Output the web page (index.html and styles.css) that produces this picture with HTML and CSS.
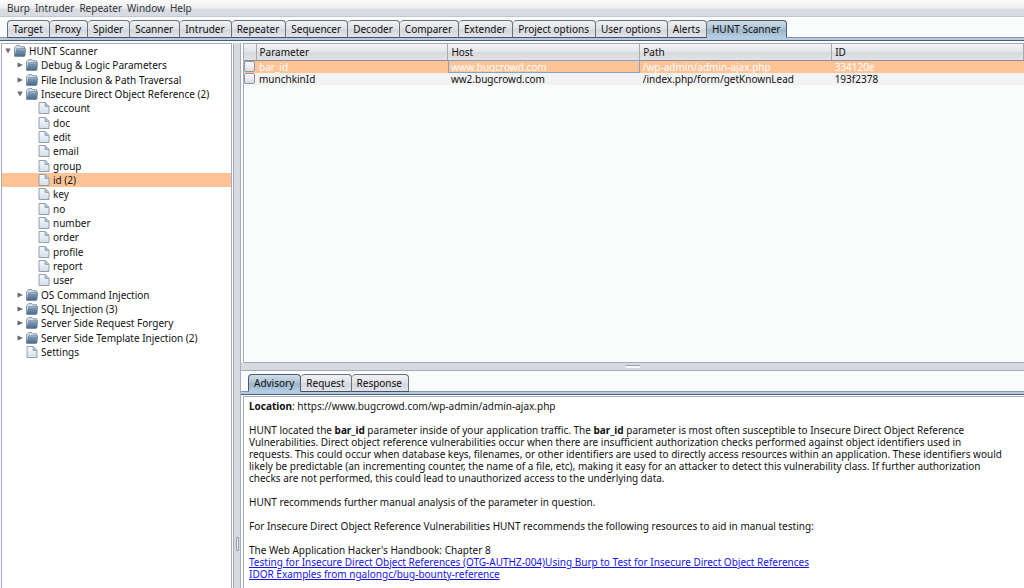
FILE: index.html
```
<!DOCTYPE html>
<html lang="en">

<head>
    <meta charset="UTF-8">
    <meta name="viewport" content="width=device-width, initial-scale=1.0">
    <title>HUNT Scanner</title>
    <link rel="stylesheet" href="styles.css">
</head>

<body>
    <svg class="defs" width="0" height="0">
        <defs>
            <linearGradient id="folder-fill" x1="0" y1="0" x2="0" y2="1">
                <stop offset="0" stop-color="#86a0b9" />
                <stop offset="1" stop-color="#4a6b8c" />
            </linearGradient>
            <linearGradient id="file-fill" x1="0" y1="0" x2="0" y2="1">
                <stop offset="0" stop-color="#f8fafc" />
                <stop offset="1" stop-color="#d2deea" />
            </linearGradient>
            <symbol id="folder" viewBox="0 0 12 12">
                <path d="M.5 11V2.8L2.6.6H6l1 1.2h3.6v2" fill="#d5dfe9" stroke="#6f8294" stroke-width=".8" />
                <path d="M.7 11.4 2.7 3.7H11.6L11 10.6 10.3 11.4Z" fill="url(#folder-fill)" stroke="#58728c" stroke-width=".6" />
                <path d="M3.2 4.5h7.6" stroke="#a9bdd0" stroke-width=".6" />
            </symbol>
            <symbol id="file" viewBox="0 0 11 12">
                <path d="M.5.5h6.3l3.7 3.7v7.3H.5Z" fill="url(#file-fill)" stroke="#8995a3" stroke-width=".9" />
                <path d="M6.6.7v3.7h3.7" fill="#b5c7d8" stroke="#7d91a6" stroke-width=".8" />
            </symbol>
            <symbol id="right" viewBox="0 0 6 6">
                <path d="M.5.5 6 3 .5 5.5Z" fill="#6b6b6b" />
            </symbol>
            <symbol id="down" viewBox="0 0 6 6">
                <path d="M.3.4h5.4L3 5.6Z" fill="#6b6b6b" />
            </symbol>
        </defs>
    </svg>

    <nav class="menubar">
        <button>Burp</button>
        <button>Intruder</button>
        <button>Repeater</button>
        <button>Window</button>
        <button>Help</button>
    </nav>

    <div class="tabs main-tabs">
        <button>Target</button>
        <button>Proxy</button>
        <button>Spider</button>
        <button>Scanner</button>
        <button>Intruder</button>
        <button>Repeater</button>
        <button>Sequencer</button>
        <button>Decoder</button>
        <button>Comparer</button>
        <button>Extender</button>
        <button>Project options</button>
        <button>User options</button>
        <button>Alerts</button>
        <button class="selected">HUNT Scanner</button>
    </div>

    <div class="workspace">
        <aside class="sidebar">
            <ul class="tree">
                <li class="root"><button aria-label="Collapse"><svg><use href="#down" /></svg></button><svg class="icon"><use href="#folder" /></svg>HUNT Scanner</li>
                <li class="group"><button aria-label="Expand"><svg><use href="#right" /></svg></button><svg class="icon"><use href="#folder" /></svg>Debug &amp; Logic Parameters</li>
                <li class="group"><button aria-label="Expand"><svg><use href="#right" /></svg></button><svg class="icon"><use href="#folder" /></svg>File Inclusion &amp; Path Traversal</li>
                <li class="group"><button aria-label="Collapse"><svg><use href="#down" /></svg></button><svg class="icon"><use href="#folder" /></svg>Insecure Direct Object Reference (2)</li>
                <li class="leaf"><svg class="icon"><use href="#file" /></svg>account</li>
                <li class="leaf"><svg class="icon"><use href="#file" /></svg>doc</li>
                <li class="leaf"><svg class="icon"><use href="#file" /></svg>edit</li>
                <li class="leaf"><svg class="icon"><use href="#file" /></svg>email</li>
                <li class="leaf"><svg class="icon"><use href="#file" /></svg>group</li>
                <li class="leaf selected"><svg class="icon"><use href="#file" /></svg>id (2)</li>
                <li class="leaf"><svg class="icon"><use href="#file" /></svg>key</li>
                <li class="leaf"><svg class="icon"><use href="#file" /></svg>no</li>
                <li class="leaf"><svg class="icon"><use href="#file" /></svg>number</li>
                <li class="leaf"><svg class="icon"><use href="#file" /></svg>order</li>
                <li class="leaf"><svg class="icon"><use href="#file" /></svg>profile</li>
                <li class="leaf"><svg class="icon"><use href="#file" /></svg>report</li>
                <li class="leaf"><svg class="icon"><use href="#file" /></svg>user</li>
                <li class="group"><button aria-label="Expand"><svg><use href="#right" /></svg></button><svg class="icon"><use href="#folder" /></svg>OS Command Injection</li>
                <li class="group"><button aria-label="Expand"><svg><use href="#right" /></svg></button><svg class="icon"><use href="#folder" /></svg>SQL Injection (3)</li>
                <li class="group"><button aria-label="Expand"><svg><use href="#right" /></svg></button><svg class="icon"><use href="#folder" /></svg>Server Side Request Forgery</li>
                <li class="group"><button aria-label="Expand"><svg><use href="#right" /></svg></button><svg class="icon"><use href="#folder" /></svg>Server Side Template Injection (2)</li>
                <li class="group-leaf"><svg class="icon"><use href="#file" /></svg>Settings</li>
            </ul>
        </aside>

        <div class="splitter vertical"><span class="grip"></span></div>

        <main class="content">
            <div class="issues">
                <table>
                    <thead>
                        <tr>
                            <th class="check"></th>
                            <th>Parameter</th>
                            <th>Host</th>
                            <th>Path</th>
                            <th>ID</th>
                        </tr>
                    </thead>
                    <tbody>
                        <tr class="selected">
                            <td class="check"><input type="checkbox" aria-label="bar_id"></td>
                            <td>bar_id</td>
                            <td class="focused">www.bugcrowd.com</td>
                            <td>/wp-admin/admin-ajax.php</td>
                            <td>334120e</td>
                        </tr>
                        <tr>
                            <td class="check"><input type="checkbox" aria-label="munchkinId"></td>
                            <td>munchkinId</td>
                            <td>ww2.bugcrowd.com</td>
                            <td>/index.php/form/getKnownLead</td>
                            <td>193f2378</td>
                        </tr>
                    </tbody>
                </table>
            </div>

            <div class="splitter horizontal"><span class="grip"></span></div>

            <div class="details">
                <div class="tabs">
                    <button class="selected">Advisory</button>
                    <button>Request</button>
                    <button>Response</button>
                </div>
                <div class="advisory">
                    <p><b>Location</b>: https://www.bugcrowd.com/wp-admin/admin-ajax.php</p>
                    <p>HUNT located the <b>bar_id</b> parameter inside of your application traffic. The <b>bar_id</b> parameter is most often susceptible to Insecure Direct Object Reference Vulnerabilities. Direct object reference vulnerabilities occur when there are insufficient authorization checks performed against object identifiers used in requests. This could occur when database keys, filenames, or other identifiers are used to directly access resources within an application. These identifiers would likely be predictable (an incrementing counter, the name of a file, etc), making it easy for an attacker to detect this vulnerability class. If further authorization checks are not performed, this could lead to unauthorized access to the underlying data.</p>
                    <p>HUNT recommends further manual analysis of the parameter in question.</p>
                    <p>For Insecure Direct Object Reference Vulnerabilities HUNT recommends the following resources to aid in manual testing:</p>
                    <p>The Web Application Hacker's Handbook: Chapter 8<br>
                        <a href="#">Testing for Insecure Direct Object References (OTG-AUTHZ-004)</a><a href="#">Using Burp to Test for Insecure Direct Object References</a><br>
                        <a href="#">IDOR Examples from ngalongc/bug-bounty-reference</a></p>
                </div>
            </div>
        </main>
    </div>
</body>

</html>
```
FILE: styles.css
```
* {
    margin: 0;
    padding: 0;
    box-sizing: border-box;
}

body {
    display: flex;
    flex-direction: column;
    height: 100vh;
    overflow: hidden;
    background: #fafbfb;
    color: #111;
    font-family: "Noto Sans", "Open Sans", sans-serif;
    font-size: 10px;
    line-height: 12px;
}

button {
    border: none;
    background: none;
    color: inherit;
    font: inherit;
}

.defs {
    position: absolute;
}

/* menu */
.menubar {
    display: flex;
    gap: 5px;
    height: 17px;
    padding: 0 7px;
    background: linear-gradient(#fafafa, #f0f1f2 45%, #d8dbe1 60%, #d8dbe1);
    border-bottom: 1px solid #c0c5ce;
    color: #333;
}

/* tabs */
.tabs {
    display: flex;
    align-items: flex-end;
    height: 24px;
    padding: 0 7px 3px;
    background: linear-gradient(#8795a5 1px, #b3cce2 1px, #b3cce2 3px, #4c5b70 3px) bottom / 100% 4px no-repeat;
}

.tabs button {
    height: 18px;
    padding: 0 6px 0 5px;
    border: 1px solid #6b717c;
    border-left-width: 0;
    border-bottom-color: #45506a;
    border-radius: 4px 4px 0 0;
    background: linear-gradient(#f0f1f3, #dfe1e6 50%, #d3d6dc 55%, #e2e4e9);
    white-space: nowrap;
}

.tabs button:first-child {
    border-left-width: 1px;
}

.tabs .selected {
    background: linear-gradient(#d1dde8, #b0c4d5 45%, #9db5ca 55%, #b3cce2);
    border-color: #4c5b70;
    border-bottom-color: #b3cce2;
}

/* layout */
.workspace {
    display: flex;
    flex: 1;
    min-height: 0;
    padding-top: 2px;
}

.sidebar {
    flex: 0 0 231px;
    margin-left: 1px;
    background: #fff;
    border: 1px solid #a5abb8;
    border-bottom: none;
}

.splitter {
    display: flex;
    align-items: center;
    justify-content: center;
    background: #d6d9df;
}

.splitter.vertical {
    flex: 0 0 8px;
    margin-left: 1px;
    border: 1px solid #a5abb8;
    border-width: 0 1px;
}

.vertical .grip {
    width: 3px;
    height: 14px;
    margin-top: 456px;
    border: 1px solid #9ba2b0;
    background: #e9ebee;
}

.splitter.horizontal {
    border: 1px solid #a5abb8;
    border-width: 0 0 1px;
}

.horizontal .grip {
    width: 14px;
    height: 3px;
    border-top: 1px solid #9ba2b0;
    background: #f6f7f8;
}

.content {
    display: grid;
    flex: 1;
    grid-template-rows: minmax(0, 320fr) 8px minmax(0, 217fr);
    min-width: 0;
}

/* tree */
.tree {
    list-style: none;
}

.tree li {
    display: flex;
    align-items: center;
    height: 14px;
    white-space: nowrap;
}

/* three rows take 43px */
.tree li:nth-child(3n) {
    height: 15px;
}

.tree .root {
    padding-left: 3px;
}

.tree .group {
    padding-left: 15px;
}

.tree .group-leaf {
    padding-left: 24px;
}

.tree .leaf {
    padding-left: 36px;
}

.tree .selected {
    background: #ffc396;
}

.tree button {
    width: 9px;
    height: 12px;
    display: flex;
    align-items: center;
}

.tree button svg {
    width: 6px;
    height: 6px;
}

.icon {
    width: 12px;
    height: 12px;
    margin-right: 3px;
}

/* table */
.issues {
    margin-left: 2px;
    border: 1px solid #a5abb8;
    border-right: none;
    overflow: hidden;
}

table {
    width: 100%;
    border-collapse: collapse;
    table-layout: fixed;
}

th {
    height: 16px;
    padding: 0 3px;
    border-right: 1px solid #a3a8b2;
    border-bottom: 1px solid #8a909b;
    background: linear-gradient(#f2f3f4, #e3e4e7 50%, #d6d8dc 55%, #e2e3e6);
    font-weight: normal;
    text-align: left;
}

td {
    height: 12px;
    padding: 0 3px;
    line-height: 12px;
}

tbody tr {
    background: #f2f2f2;
}

tbody .selected {
    background: #ffc396;
    color: #fff;
}

.focused {
    outline: 1px solid #84a5c4;
    outline-offset: -1px;
}

.check {
    width: 12px;
    padding: 0;
}

td input {
    display: block;
    appearance: none;
    width: 11px;
    height: 11px;
    border: 1px solid #8f96a3;
    border-radius: 2px;
    background: linear-gradient(#fafafa, #d9dde3);
}

/* details */
.details {
    display: flex;
    flex-direction: column;
    min-height: 0;
}

.details .tabs {
    flex: none;
}

.advisory {
    flex: 1;
    margin: 1px 0 0 2px;
    padding: 3px 20px 0 5px;
    border: 1px solid #a5abb8;
    border-width: 1px 0 0 1px;
    background: #fff;
    overflow: hidden;
}

.advisory p {
    margin-bottom: 12px;
}

.advisory a {
    color: #1414f0;
}
```
